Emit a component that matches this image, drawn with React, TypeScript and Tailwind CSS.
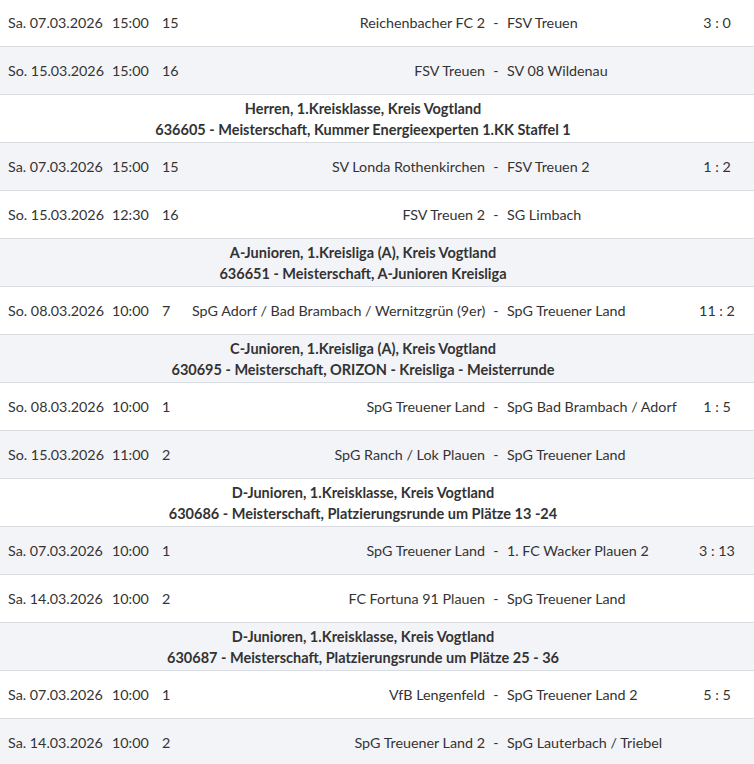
import React from "react";

type Match = {
  day: string;
  time: string;
  md: string;
  home: string;
  away: string;
  score?: string;
};

type Row =
  | { kind: "match"; m: Match }
  | { kind: "head"; title: string; sub: string };

const rows: Row[] = [
  { kind: "match", m: { day: "Sa. 07.03.2026", time: "15:00", md: "15", home: "Reichenbacher FC 2", away: "FSV Treuen", score: "3 : 0" } },
  { kind: "match", m: { day: "So. 15.03.2026", time: "15:00", md: "16", home: "FSV Treuen", away: "SV 08 Wildenau" } },
  { kind: "head", title: "Herren, 1.Kreisklasse, Kreis Vogtland", sub: "636605 - Meisterschaft, Kummer Energieexperten 1.KK Staffel 1" },
  { kind: "match", m: { day: "Sa. 07.03.2026", time: "15:00", md: "15", home: "SV Londa Rothenkirchen", away: "FSV Treuen 2", score: "1 : 2" } },
  { kind: "match", m: { day: "So. 15.03.2026", time: "12:30", md: "16", home: "FSV Treuen 2", away: "SG Limbach" } },
  { kind: "head", title: "A-Junioren, 1.Kreisliga (A), Kreis Vogtland", sub: "636651 - Meisterschaft, A-Junioren Kreisliga" },
  { kind: "match", m: { day: "So. 08.03.2026", time: "10:00", md: "7", home: "SpG Adorf / Bad Brambach / Wernitzgrün (9er)", away: "SpG Treuener Land", score: "11 : 2" } },
  { kind: "head", title: "C-Junioren, 1.Kreisliga (A), Kreis Vogtland", sub: "630695 - Meisterschaft, ORIZON - Kreisliga - Meisterrunde" },
  { kind: "match", m: { day: "So. 08.03.2026", time: "10:00", md: "1", home: "SpG Treuener Land", away: "SpG Bad Brambach / Adorf", score: "1 : 5" } },
  { kind: "match", m: { day: "So. 15.03.2026", time: "11:00", md: "2", home: "SpG Ranch / Lok Plauen", away: "SpG Treuener Land" } },
  { kind: "head", title: "D-Junioren, 1.Kreisklasse, Kreis Vogtland", sub: "630686 - Meisterschaft, Platzierungsrunde um Plätze 13 -24" },
  { kind: "match", m: { day: "Sa. 07.03.2026", time: "10:00", md: "1", home: "SpG Treuener Land", away: "1. FC Wacker Plauen 2", score: "3 : 13" } },
  { kind: "match", m: { day: "Sa. 14.03.2026", time: "10:00", md: "2", home: "FC Fortuna 91 Plauen", away: "SpG Treuener Land" } },
  { kind: "head", title: "D-Junioren, 1.Kreisklasse, Kreis Vogtland", sub: "630687 - Meisterschaft, Platzierungsrunde um Plätze 25 - 36" },
  { kind: "match", m: { day: "Sa. 07.03.2026", time: "10:00", md: "1", home: "VfB Lengenfeld", away: "SpG Treuener Land 2", score: "5 : 5" } },
  { kind: "match", m: { day: "Sa. 14.03.2026", time: "10:00", md: "2", home: "SpG Treuener Land 2", away: "SpG Lauterbach / Triebel" } },
];

export default function App() {
  return (
    <div
      className="w-[754px] overflow-hidden bg-white text-[#333]"
      style={{ fontFamily: "Lato, 'Noto Sans', sans-serif" }}
    >
      <div className="-mt-px">
        {rows.map((row, i) => {
          const stripe = i % 2 === 1 ? "bg-[#f3f4f8]" : "bg-white";
          if (row.kind === "head") {
            return (
              <div
                key={i}
                className={`flex h-12 flex-col items-center justify-center border-b border-[#d9dce1] pr-[28px] text-[14.5px] font-bold leading-[21px] ${stripe}`}
              >
                <div>{row.title}</div>
                <div>{row.sub}</div>
              </div>
            );
          }
          const m = row.m;
          return (
            <div
              key={i}
              className={`grid h-12 grid-cols-[104px_50px_30px_293px_22px_1fr_54px] items-center border-b border-[#d9dce1] pl-2 pr-[10px] text-[14.3px] ${stripe}`}
            >
              <div>{m.day}</div>
              <div>{m.time}</div>
              <div>{m.md}</div>
              <div className="text-right whitespace-nowrap">{m.home}</div>
              <div className="text-center">-</div>
              <div className="whitespace-nowrap">{m.away}</div>
              <div className="text-center">{m.score ?? ""}</div>
            </div>
          );
        })}
      </div>
    </div>
  );
}
